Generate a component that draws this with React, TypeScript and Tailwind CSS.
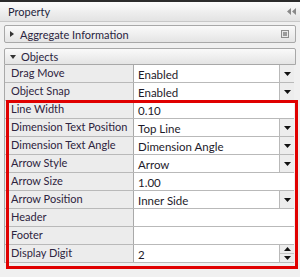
import * as React from "react";

type Row = {
  label: string;
  value: string;
  kind: "text" | "select" | "spin";
};

const ROWS: Row[] = [
  { label: "Drag Move", value: "Enabled", kind: "select" },
  { label: "Object Snap", value: "Enabled", kind: "select" },
  { label: "Line Width", value: "0.10", kind: "text" },
  { label: "Dimension Text Position", value: "Top Line", kind: "select" },
  { label: "Dimension Text Angle", value: "Dimension Angle", kind: "select" },
  { label: "Arrow Style", value: "Arrow", kind: "select" },
  { label: "Arrow Size", value: "1.00", kind: "text" },
  { label: "Arrow Position", value: "Inner Side", kind: "select" },
  { label: "Header", value: "", kind: "text" },
  { label: "Footer", value: "", kind: "text" },
  { label: "Display Digit", value: "2", kind: "spin" },
];

function DownTri() {
  return (
    <svg width="7" height="4" viewBox="0 0 7 4">
      <path d="M0 0 H7 L3.5 4 Z" fill="#111" />
    </svg>
  );
}

function UpTri() {
  return (
    <svg width="7" height="4" viewBox="0 0 7 4">
      <path d="M0 4 H7 L3.5 0 Z" fill="#111" />
    </svg>
  );
}

function PropRow({ row }: { row: Row }) {
  return (
    <div className="grid h-[18px] grid-cols-[129px_1fr] border-b border-[#b9b9b9]">
      <div className="flex items-center whitespace-nowrap border-r border-[#a9a9a9] bg-[#ececec] pl-[6px] pb-[3px] text-[11px] text-[#2e2440]">
        {row.label}
      </div>
      <div className="flex items-stretch bg-white">
        <div className="flex flex-1 items-end whitespace-nowrap pb-[2px] pl-[4px] text-[11.5px] text-[#1d1a2a]">
          {row.value}
        </div>
        {row.kind === "select" && (
          <div className="flex w-[15px] items-center justify-center border-l border-[#b9b9b9] bg-[#ededed]">
            <DownTri />
          </div>
        )}
        {row.kind === "spin" && (
          <div className="flex w-[15px] flex-col border-l border-[#b9b9b9] bg-[#ededed]">
            <div className="flex flex-1 items-center justify-center border-b border-[#c4c4c4]">
              <UpTri />
            </div>
            <div className="flex flex-1 items-center justify-center">
              <DownTri />
            </div>
          </div>
        )}
      </div>
    </div>
  );
}

export default function App() {
  const top = ROWS.slice(0, 2);
  const marked = ROWS.slice(2);
  return (
    <div
      className="flex h-[277px] w-[300px] flex-col overflow-hidden bg-[#f0f0f0] text-[11px] leading-none"
      style={{ fontFamily: 'Lato, "Noto Sans", sans-serif' }}
    >
      <div className="h-[2px] bg-[#2b2b2b]" />
      {/* title bar */}
      <div className="flex h-[20px] items-center justify-between border-b border-[#c8c8c8] bg-gradient-to-b from-[#fbfbfb] to-[#e3e3e3] pl-[8px] pr-[4px] text-[11px] text-[#1e1e3c]">
        <span>Property</span>
        <svg width="9" height="7" viewBox="0 0 9 7">
          <path d="M4 0 V7 L0 3.5 Z M9 0 V7 L5 3.5 Z" fill="#8a8a8a" />
        </svg>
      </div>

      <div className="flex flex-col px-[4px] pt-[3px]">
        {/* aggregate expander */}
        <div className="flex h-[18px] items-center justify-between rounded-[2px] border border-[#a8a8a8] bg-gradient-to-b from-[#fafafa] to-[#e4e4e4] pl-[5px] pr-[6px] text-[11px] text-[#2a2440]">
          <div className="flex items-center gap-[6px]">
            <svg width="4" height="6" viewBox="0 0 4 6">
              <path d="M0 0 L4 3 L0 6 Z" fill="#333" />
            </svg>
            <span>Aggregate Information</span>
          </div>
          <svg width="8" height="8" viewBox="0 0 8 8">
            <rect x="0.5" y="0.5" width="7" height="7" fill="#e8e8e8" stroke="#8c8c8c" />
            <rect x="2" y="2" width="4" height="4" fill="#9a9a9a" />
          </svg>
        </div>

        {/* objects section */}
        <div className="mt-[5px] flex flex-col">
          <div className="flex h-[17px] items-center gap-[5px] rounded-t-[2px] border border-[#a8a8a8] bg-gradient-to-b from-[#fafafa] to-[#e4e4e4] pl-[5px] text-[11px] text-[#2a2440]">
            <svg width="6" height="4" viewBox="0 0 6 4">
              <path d="M0 0 H6 L3 4 Z" fill="#333" />
            </svg>
            <span>Objects</span>
          </div>
          <div className="mr-[2px] border-l border-[#a9a9a9]">
            {top.map((r) => (
              <PropRow key={r.label} row={r} />
            ))}
            <div className="relative">
              {marked.map((r) => (
                <PropRow key={r.label} row={r} />
              ))}
              <div className="pointer-events-none absolute -top-[1px] -bottom-[6px] left-[1px] -right-[4px] border-[3px] border-[#e00000]" />
            </div>
          </div>
        </div>
      </div>
    </div>
  );
}
